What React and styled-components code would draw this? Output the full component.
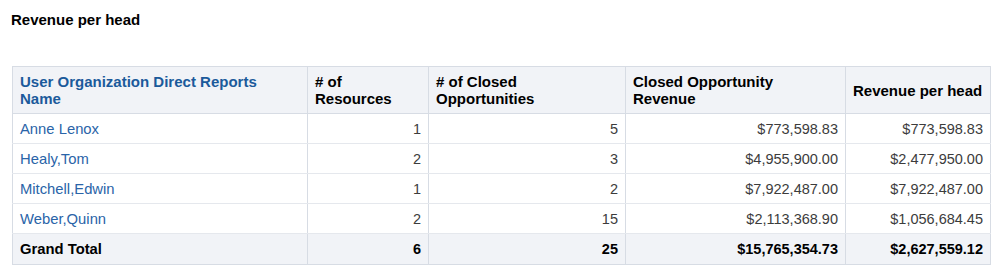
import React from "react";
import styled, { createGlobalStyle } from "styled-components";

const GlobalStyle = createGlobalStyle`
  body {
    margin: 0;
    background: #ffffff;
    font-family: "Liberation Sans", Arial, sans-serif;
  }
`;

const Page = styled.div`
  padding: 12px 12px 0 11px;
`;

const Title = styled.div`
  font-size: 15px;
  font-weight: bold;
  color: #000000;
  line-height: 16px;
  margin-bottom: 38px;
`;

const Table = styled.table`
  border-collapse: collapse;
  width: 978px;
  margin-left: 1px;
  table-layout: fixed;
`;

const HeadCell = styled.th`
  background: #f1f3f7;
  border: 1px solid #d7dce4;
  text-align: left;
  vertical-align: middle;
  font-size: 15px;
  font-weight: bold;
  line-height: 17px;
  padding: 6px 7px;
  height: 34px;
  color: ${(p) => (p.$link ? "#1b5a9b" : "#000000")};
`;

const Row = styled.tr`
  background: ${(p) => (p.$total ? "#f1f3f7" : "#ffffff")};
`;

const Cell = styled.td`
  border: 1px solid ${(p) => (p.$total ? "#d7dce4" : "#e5e8ed")};
  border-left-color: #d7dce4;
  border-right-color: #d7dce4;
  padding: 0 7px;
  height: ${(p) => (p.$total ? "30px" : "29px")};
  text-align: ${(p) => (p.$num ? "right" : "left")};
  font-size: ${(p) => (p.$num ? "14.5px" : "14.8px")};
  color: ${(p) => (p.$total ? "#000000" : p.$num ? "#3c3c3c" : "#2a64a8")};
  font-weight: ${(p) => (p.$total ? "bold" : "normal")};
  white-space: nowrap;
`;

const columns = [
  { lines: ["User Organization Direct Reports", "Name"], width: 295, link: true },
  { lines: ["# of", "Resources"], width: 121 },
  { lines: ["# of Closed", "Opportunities"], width: 197 },
  { lines: ["Closed Opportunity", "Revenue"], width: 220 },
  { lines: ["Revenue per head"], width: 145 },
];

const rows = [
  ["Anne Lenox", "1", "5", "$773,598.83", "$773,598.83"],
  ["Healy,Tom", "2", "3", "$4,955,900.00", "$2,477,950.00"],
  ["Mitchell,Edwin", "1", "2", "$7,922,487.00", "$7,922,487.00"],
  ["Weber,Quinn", "2", "15", "$2,113,368.90", "$1,056,684.45"],
];

const total = ["Grand Total", "6", "25", "$15,765,354.73", "$2,627,559.12"];

export default function App() {
  return (
    <>
      <GlobalStyle />
      <Page>
        <Title>Revenue per head</Title>
        <Table>
          <colgroup>
            {columns.map((c, i) => (
              <col key={i} style={{ width: c.width }} />
            ))}
          </colgroup>
          <thead>
            <tr>
              {columns.map((c, i) => (
                <HeadCell key={i} $link={c.link}>
                  {c.lines.map((l, j) => (
                    <React.Fragment key={j}>
                      {j > 0 && <br />}
                      {l}
                    </React.Fragment>
                  ))}
                </HeadCell>
              ))}
            </tr>
          </thead>
          <tbody>
            {rows.map((r) => (
              <Row key={r[0]}>
                {r.map((v, i) => (
                  <Cell key={i} $num={i > 0}>
                    {v}
                  </Cell>
                ))}
              </Row>
            ))}
            <Row $total>
              {total.map((v, i) => (
                <Cell key={i} $num={i > 0} $total>
                  {v}
                </Cell>
              ))}
            </Row>
          </tbody>
        </Table>
      </Page>
    </>
  );
}
